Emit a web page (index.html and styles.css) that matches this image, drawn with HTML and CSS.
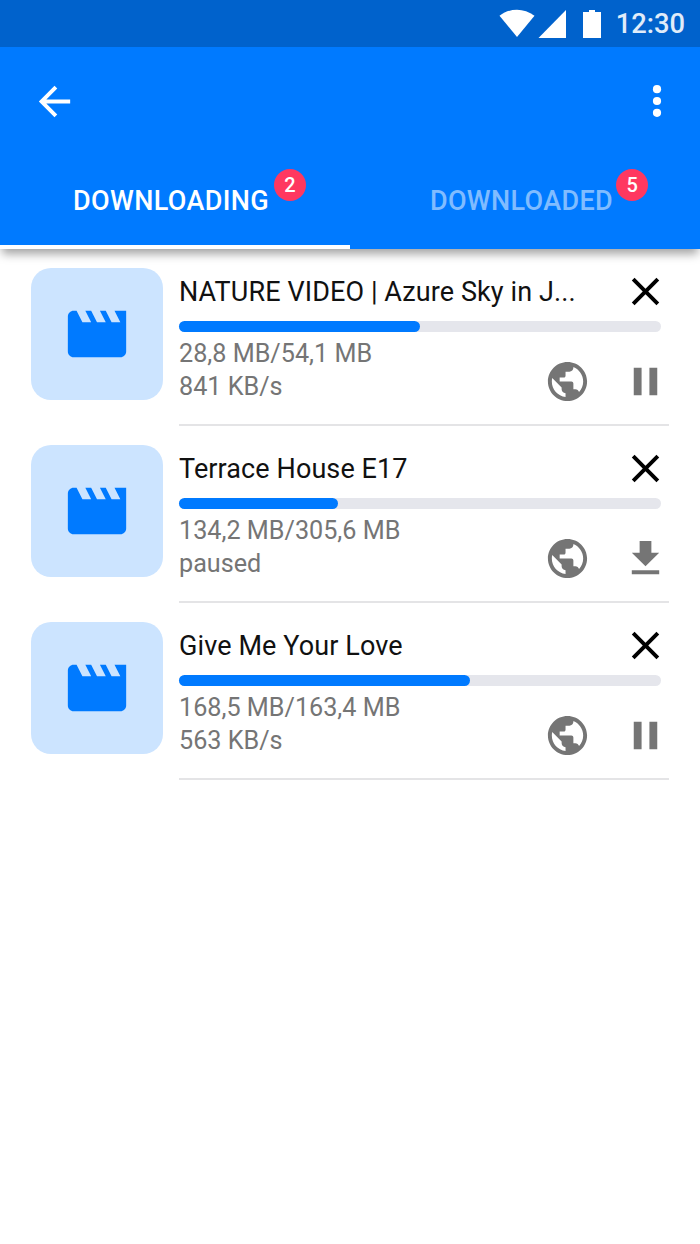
FILE: index.html
```
<!DOCTYPE html>
<html lang="en">
<head>
<meta charset="utf-8">
<title>Downloads</title>
<link rel="stylesheet" href="styles.css">
</head>
<body>
<svg class="sprite" aria-hidden="true">
  <symbol id="movie" viewBox="0 0 24 24"><path d="M18 4l2 4h-3l-2-4h-2l2 4h-3l-2-4H8l2 4H7L5 4H4c-1.1 0-1.99.9-1.99 2L2 18c0 1.1.9 2 2 2h16c1.1 0 2-.9 2-2V4h-4z"/></symbol>
  <symbol id="close" viewBox="0 0 24 24"><path d="M19 6.41L17.59 5 12 10.59 6.41 5 5 6.41 10.59 12 5 17.59 6.41 19 12 13.41 17.59 19 19 17.59 13.41 12z"/></symbol>
  <symbol id="globe" viewBox="0 0 24 24"><path d="M12 2C6.48 2 2 6.48 2 12s4.48 10 10 10 10-4.48 10-10S17.52 2 12 2zm-1 17.93c-3.95-.49-7-3.85-7-7.93 0-.62.08-1.21.21-1.79L9 15v1c0 1.1.9 2 2 2v1.93zm6.9-2.54c-.26-.81-1-1.39-1.9-1.39h-1v-3c0-.55-.45-1-1-1H8v-2h2c.55 0 1-.45 1-1V7h2c1.1 0 2-.9 2-2v-.41c2.93 1.19 5 4.06 5 7.41 0 2.08-.8 3.97-2.1 5.39z"/></symbol>
  <symbol id="pause" viewBox="0 0 24 24"><path d="M6 5h4v14H6zM14 5h4v14h-4z"/></symbol>
  <symbol id="download" viewBox="0 0 24 24"><path d="M19 9h-4V3H9v6H5l7 7 7-7zM5 18v2h14v-2H5z"/></symbol>
</svg>

<header class="header">
  <div class="status">
    <svg class="status-icons" width="104" height="30" viewBox="0 0 104 30">
      <path d="M.5 6.700C11-1.300 25-1.300 35.500 6.700L18 28z"/>
      <path d="M67 1v28H39.500z"/>
      <path d="M84 3h6V1h6v2h6v26H84z"/>
    </svg>
    <span class="clock">12:30</span>
  </div>
  <div class="toolbar">
    <svg class="back" viewBox="0 0 24 24"><path d="M20 11H7.830l5.590-5.590L12 4l-8 8 8 8 1.410-1.410L7.830 13H20z"/></svg>
    <svg class="more" viewBox="0 0 10 34"><circle cx="5" cy="5.200" r="4.100"/><circle cx="5" cy="17" r="4.100"/><circle cx="5" cy="28.800" r="4.100"/></svg>
  </div>
  <nav class="tabs">
    <div class="tab tab-active"><span class="tab-label">DOWNLOADING</span><span class="badge">2</span></div>
    <div class="tab"><span class="tab-label">DOWNLOADED</span><span class="badge">5</span></div>
  </nav>
</header>

<main class="list">
  <article class="item">
    <div class="thumb"><svg class="movie"><use href="#movie"/></svg></div>
    <div class="body">
      <div class="title-row"><h2 class="title">NATURE VIDEO | Azure Sky in J...</h2><svg class="icon icon-close"><use href="#close"/></svg></div>
      <div class="track"><div class="fill" style="width:241px"></div></div>
      <div class="info">
        <div class="meta"><div>28,8 MB/54,1 MB</div><div>841 KB/s</div></div>
        <div class="actions"><svg class="icon"><use href="#globe"/></svg><svg class="icon"><use href="#pause"/></svg></div>
      </div>
    </div>
  </article>
  <article class="item">
    <div class="thumb"><svg class="movie"><use href="#movie"/></svg></div>
    <div class="body">
      <div class="title-row"><h2 class="title">Terrace House E17</h2><svg class="icon icon-close"><use href="#close"/></svg></div>
      <div class="track"><div class="fill" style="width:159px"></div></div>
      <div class="info">
        <div class="meta"><div>134,2 MB/305,6 MB</div><div>paused</div></div>
        <div class="actions"><svg class="icon"><use href="#globe"/></svg><svg class="icon"><use href="#download"/></svg></div>
      </div>
    </div>
  </article>
  <article class="item">
    <div class="thumb"><svg class="movie"><use href="#movie"/></svg></div>
    <div class="body">
      <div class="title-row"><h2 class="title">Give Me Your Love</h2><svg class="icon icon-close"><use href="#close"/></svg></div>
      <div class="track"><div class="fill" style="width:291px"></div></div>
      <div class="info">
        <div class="meta"><div>168,5 MB/163,4 MB</div><div>563 KB/s</div></div>
        <div class="actions"><svg class="icon"><use href="#globe"/></svg><svg class="icon"><use href="#pause"/></svg></div>
      </div>
    </div>
  </article>
</main>
</body>
</html>
```
FILE: styles.css
```
* { box-sizing: border-box; }

body {
  margin: 0;
  min-height: 1244px;
  background: #fff;
  font-family: Roboto, sans-serif;
  color: #000;
}

svg { display: block; flex: none; }

.sprite { position: absolute; width: 0; height: 0; }

.header {
  height: 249px;
  background: #007aff;
  box-shadow: 0 7px 9px -2px rgba(0, 0, 0, .36);
}

.status {
  display: flex;
  align-items: center;
  justify-content: flex-end;
  gap: 13px;
  height: 47px;
  padding-right: 15px;
  background: #0062cc;
}

.status-icons { fill: #fff; }

.clock {
  padding-top: 1px;
  font-size: 27.3px;
  font-weight: 500;
  line-height: 46px;
  color: #e0ecf9;
}

.toolbar {
  display: flex;
  align-items: center;
  justify-content: space-between;
  height: 108px;
  padding: 0 38px 0 31px;
}

.back { width: 47px; height: 47px; fill: #fff; }
.more { width: 10px; height: 34px; fill: #fff; }

.tabs { display: flex; height: 94px; }

.tab {
  display: flex;
  justify-content: center;
  gap: 3px;
  width: 350px;
  padding: 14px 0 0 28px;
  color: #80bcff;
}

.tab-active {
  gap: 5px;
  padding-left: 29px;
  color: #fff;
  border-bottom: 4px solid #fff;
}

.tab-label {
  padding-top: 16px;
  font-size: 27px;
  font-weight: 500;
  line-height: 32px;
  letter-spacing: .35px;
}

.badge {
  width: 32px;
  height: 32px;
  border-radius: 50%;
  background: #ff3860;
  color: #fff;
  font-size: 20px;
  font-weight: 500;
  line-height: 33px;
  text-align: center;
}

.list { padding: 19px 31px 0; }

.item { display: flex; gap: 16px; height: 177px; }

.thumb {
  display: grid;
  place-items: center;
  flex: none;
  width: 132px;
  height: 132px;
  border-radius: 20px;
  background: #cce4ff;
}

.movie { width: 70px; height: 70px; fill: #007aff; }

.body {
  width: 490px;
  height: 158px;
  border-bottom: 2px solid #e4e4e6;
}

.title-row {
  display: flex;
  align-items: center;
  justify-content: space-between;
  height: 47px;
}

.title {
  margin: 0;
  padding-top: 2px;
  font-size: 27px;
  font-weight: 400;
  line-height: 47px;
  letter-spacing: .1px;
  color: #111;
  white-space: nowrap;
}

.icon { width: 47px; height: 47px; fill: #757575; }
.icon-close { fill: #000; }

.track {
  width: 482px;
  height: 11px;
  margin-top: 6px;
  border-radius: 6px;
  background: #e5e6ec;
}

.fill { height: 11px; border-radius: 6px; background: #007aff; }

.info { display: flex; justify-content: space-between; }

.meta {
  padding-top: 5px;
  font-size: 25.2px;
  line-height: 33px;
  color: #757575;
}

.actions { display: flex; gap: 31px; padding-top: 25.500px; }
```
